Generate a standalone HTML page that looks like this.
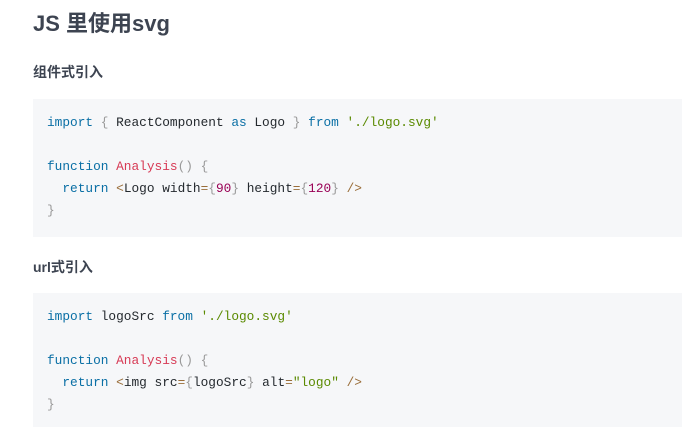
<!DOCTYPE html>
<html><head><meta charset="utf-8"><style>
body{margin:0;background:#fff;width:682px;height:427px;overflow:hidden;font-family:"Liberation Sans","Noto Sans CJK SC",sans-serif;color:#3d4451}
.t{position:absolute;left:33px;font-weight:bold;white-space:nowrap}
pre{position:absolute;left:33px;width:649px;margin:0;background:#f6f7f9;font-family:"Liberation Mono",monospace;font-size:12.8px;line-height:22px;color:#24292e;padding:0 0 0 14px;box-sizing:border-box}
.k{color:#0a6fa5}.s{color:#5a8a00}.f{color:#d73a55}.p{color:#999}.n{color:#990055}.o{color:#9a6e3a}
</style></head><body>
<div class="t" style="top:9px;font-size:22px;line-height:30px">JS 里使用svg</div>
<div class="t" style="top:62px;font-size:14px;line-height:20px">组件式引入</div>
<pre style="top:99px;height:138px;padding-top:13px"><span class="k">import</span> <span class="p">{</span> ReactComponent <span class="k">as</span> Logo <span class="p">}</span> <span class="k">from</span> <span class="s">'./logo.svg'</span>

<span class="k">function</span> <span class="f">Analysis</span><span class="p">()</span> <span class="p">{</span>
  <span class="k">return</span> <span class="o">&lt;</span>Logo width<span class="o">=</span><span class="p">{</span><span class="n">90</span><span class="p">}</span> height<span class="o">=</span><span class="p">{</span><span class="n">120</span><span class="p">}</span> <span class="o">/&gt;</span>
<span class="p">}</span></pre>
<div class="t" style="top:257px;font-size:14px;line-height:20px">url式引入</div>
<pre style="top:293px;height:134px;padding-top:13px"><span class="k">import</span> logoSrc <span class="k">from</span> <span class="s">'./logo.svg'</span>

<span class="k">function</span> <span class="f">Analysis</span><span class="p">()</span> <span class="p">{</span>
  <span class="k">return</span> <span class="o">&lt;</span>img src<span class="o">=</span><span class="p">{</span>logoSrc<span class="p">}</span> alt<span class="o">=</span><span class="s">"logo"</span> <span class="o">/&gt;</span>
<span class="p">}</span></pre>
</body></html>
